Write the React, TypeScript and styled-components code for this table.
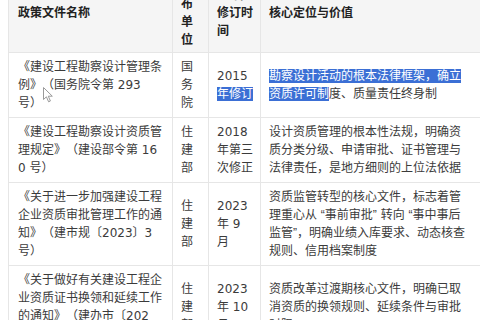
import type { ReactNode } from 'react';
import styled, { createGlobalStyle } from 'styled-components';

const GlobalStyle = createGlobalStyle`
  html, body {
    margin: 0;
    padding: 0;
    background: #ffffff;
  }
  body {
    font-family: "DejaVu Sans", "Noto Sans CJK SC", sans-serif;
  }
`;

interface PolicyRow {
  name: string;
  org: string;
  date: ReactNode;
  value: ReactNode;
}

const Viewport = styled.div`
  position: relative;
  width: 480px;
  height: 320px;
  overflow: hidden;
  padding-left: 8px;
  box-sizing: border-box;
`;

const Table = styled.table`
  /* page is scrolled a little: header row starts above the window */
  margin-top: -27px;
  border-collapse: collapse;
  table-layout: fixed;
  width: 475px;
  font-size: 12px;
  line-height: 18px;
  color: #3b3b3b;
  text-spacing-trim: space-all;
`;

const Th = styled.th<{ $w: number; $pr?: number }>`
  box-sizing: border-box;
  width: ${(p) => p.$w}px;
  padding: 3px ${(p) => p.$pr ?? 8}px 3px 8px;
  background: #f5f5f5;
  border: 1px solid #e6e6e6;
  color: #222222;
  font-weight: 700;
  text-align: left;
  vertical-align: middle;
  word-break: break-all;

  &:first-child {
    padding-left: 9px;
  }
`;

const Td = styled.td<{ $pr?: number }>`
  box-sizing: border-box;
  padding: 5px ${(p) => p.$pr ?? 8}px 5px 8px;
  border: 1px solid #e6e6e6;
  vertical-align: middle;
  word-break: break-all;

  &:first-child {
    padding-left: 9px;
  }
`;

const Sel = styled.span`
  background: #3b6fd5;
  color: #ffffff;
`;

const Quote = styled.span`
  font-family: "Liberation Sans", sans-serif;
`;

const Cursor = styled.svg`
  position: absolute;
  left: 43px;
  top: 87px;
  width: 11px;
  height: 16px;
  pointer-events: none;
`;

const rows: PolicyRow[] = [
  {
    name: '《建设工程勘察设计管理条例》（国务院令第 293 号）',
    org: '国务院',
    date: (
      <>
        2015 <Sel>年修订</Sel>
      </>
    ),
    value: (
      <>
        <Sel>勘察设计活动的根本法律框架，确立资质许可制</Sel>度、质量责任终身制
      </>
    ),
  },
  {
    name: '《建设工程勘察设计资质管理规定》（建设部令第 160 号）',
    org: '住建部',
    date: '2018 年第三次修正',
    value: '设计资质管理的根本性法规，明确资质分类分级、申请审批、证书管理与法律责任，是地方细则的上位法依据',
  },
  {
    name: '《关于进一步加强建设工程企业资质审批管理工作的通知》（建市规〔2023〕3 号）',
    org: '住建部',
    date: '2023 年 9 月',
    value: (
      <>
        资质监管转型的核心文件，标志着管理重心从 <Quote>“</Quote>事前审批<Quote>”</Quote> 转向{' '}
        <Quote>“</Quote>事中事后监管<Quote>”</Quote>，明确业绩入库要求、动态核查规则、信用档案制度
      </>
    ),
  },
  {
    name: '《关于做好有关建设工程企业资质证书换领和延续工作的通知》（建办市〔2023〕40 号）',
    org: '住建部',
    date: '2023 年 10 月',
    value: '资质改革过渡期核心文件，明确已取消资质的换领规则、延续条件与审批时限',
  },
];

export default function App() {
  return (
    <>
      <GlobalStyle />
      <Viewport>
        <Table>
          <thead>
            <tr>
              <Th $w={164}>政策文件名称</Th>
              <Th $w={36}>发布单位</Th>
              <Th $w={52} $pr={6}>发布/修订时间</Th>
              <Th $w={223} $pr={14}>核心定位与价值</Th>
            </tr>
          </thead>
          <tbody>
            {rows.map((r, i) => (
              <tr key={i}>
                <Td>{r.name}</Td>
                <Td>{r.org}</Td>
                <Td $pr={6}>{r.date}</Td>
                <Td $pr={14}>{r.value}</Td>
              </tr>
            ))}
          </tbody>
        </Table>
        <Cursor viewBox="0 0 11 16">
          <path
            d="M0.5 0.5 L0.5 12.5 L3.4 9.8 L5.6 14.8 L7.4 14 L5.3 9.2 L9.3 9.2 Z"
            fill="#ffffff"
            stroke="#9a9a9a"
            strokeWidth="1"
            strokeLinejoin="round"
          />
        </Cursor>
      </Viewport>
    </>
  );
}
